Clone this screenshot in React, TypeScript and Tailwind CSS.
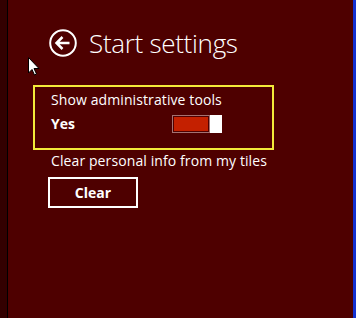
import React from "react";

export default function App() {
  return (
    <div
      className="relative flex w-[356px] h-[318px] overflow-hidden"
      style={{ fontFamily: '"Open Sans", "Noto Sans", sans-serif' }}
    >
      <div className="w-[7px] h-full bg-[#330000]" />
      <div className="w-[1px] h-full bg-black" />
      <div className="flex-1 h-full bg-[#4e0000] text-white">
        <div className="flex items-center pt-[29px] pl-[41px]">
          <svg width="28" height="28" viewBox="0 0 28 28" className="shrink-0">
            <circle cx="14" cy="14" r="12.8" fill="none" stroke="white" strokeWidth="2" />
            <path d="M7.5 14 H20.5 M13.5 8 L7.5 14 L13.5 20" fill="none" stroke="white" strokeWidth="2.5" strokeLinejoin="miter" />
          </svg>
          <span className="ml-[12px] text-[26px] font-light leading-[28px] tracking-[-0.3px]">
            Start settings
          </span>
        </div>
        <div className="mt-[28px] ml-[25px] w-[241px] h-[65px] border-2 border-[#f2ea3a] pl-[16px] pt-[4px]">
          <div className="text-[14px] leading-[18px] tracking-[0.1px]">Show administrative tools</div>
          <div className="flex items-center mt-[6px]">
            <span className="text-[14px] font-bold leading-[18px] w-[121px]">Yes</span>
            <div className="flex h-[18px] w-[50px]">
              <div className="flex-1 border border-[#a47272] p-[1px] bg-[#4e0000]">
                <div className="w-full h-full bg-[#c42000]" />
              </div>
              <div className="w-[12px] h-full bg-white" />
            </div>
          </div>
        </div>
        <div className="ml-[43px] mt-[2px] text-[14px] leading-[18px] tracking-[0.1px]">
          Clear personal info from my tiles
        </div>
        <div className="ml-[40px] mt-[7px] w-[90px] h-[31px] border-2 border-white flex items-center justify-center text-[14px] font-bold">
          Clear
        </div>
      </div>
      <div className="w-[3px] h-full bg-[#1432d2]" />
      <svg
        className="absolute left-[28px] top-[57px]"
        width="12"
        height="19"
        viewBox="0 0 12 19"
      >
        <path d="M0.5 0.5 V16 L4 12.5 L6.5 18 L8.5 17 L6 11.5 H11 Z" fill="white" stroke="black" strokeWidth="1" />
      </svg>
    </div>
  );
}
